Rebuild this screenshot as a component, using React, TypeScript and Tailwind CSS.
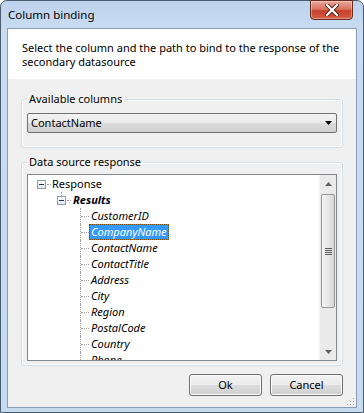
const font = "font-['Noto_Sans',sans-serif]"

const fields = [
  'CustomerID',
  'CompanyName',
  'ContactName',
  'ContactTitle',
  'Address',
  'City',
  'Region',
  'PostalCode',
  'Country',
  'Phone',
]

function MinusBox() {
  return (
    <div className="flex h-[9px] w-[9px] shrink-0 items-center justify-center border border-[#8d9db3] bg-[linear-gradient(#ffffff,#e4e8ee)]">
      <div className="h-px w-[5px] bg-[#1d3566]" />
    </div>
  )
}

function CloseButton() {
  return (
    <div className="absolute right-[10px] top-[-1px] flex h-[20px] w-[43px] items-center justify-center rounded-b-[4px] border border-[#6b2a20] bg-[linear-gradient(#e9a99a,#d9735f_45%,#c4402a_55%,#d6604a)] shadow-[inset_0_0_0_1px_rgba(255,255,255,0.35)]">
      <svg width="14" height="12" viewBox="0 0 14 12">
        <path d="M2 1 L12 11 M12 1 L2 11" stroke="#4a1d16" strokeWidth="4" strokeLinecap="square" />
        <path d="M2 1 L12 11 M12 1 L2 11" stroke="#ffffff" strokeWidth="2.2" strokeLinecap="square" />
      </svg>
    </div>
  )
}

function ChildRow({ label, selected }: { label: string; selected?: boolean }) {
  return (
    <div className="flex h-[16px] shrink-0 items-stretch">
      <div className="w-[52px] shrink-0" />
      <div className="flex w-[9px] shrink-0 flex-col border-l border-dotted border-[#a0a0a0]">
        <div className="h-[8px]" />
        <div className="border-t border-dotted border-[#a0a0a0]" />
      </div>
      <span
        className={
          selected
            ? 'px-[1px] leading-[14px] italic text-white bg-[#3399ff] border border-dotted border-[#7a4a00]'
            : 'px-[2px] leading-[16px] italic text-black'
        }
      >
        {label}
      </span>
    </div>
  )
}

function Scrollbar() {
  return (
    <div className="flex w-[17px] shrink-0 flex-col bg-[#eaeaea] border-l border-[#f4f4f4]">
      <div className="flex h-[17px] items-center justify-center">
        <svg width="7" height="4" viewBox="0 0 7 4">
          <path d="M0 4 L3.5 0 L7 4 Z" fill="#606060" />
        </svg>
      </div>
      <div className="h-[2px]" />
      <div className="mx-[1px] flex h-[114px] items-center justify-center rounded-[2px] border border-[#979797] bg-[linear-gradient(90deg,#f4f4f4,#e7e7e7_50%,#d6d6d6)]">
        <div className="flex flex-col gap-[1px]">
          <div className="h-px w-[7px] bg-[#5a5a5a]" />
          <div className="h-px w-[7px] bg-[#5a5a5a]" />
          <div className="h-px w-[7px] bg-[#5a5a5a]" />
          <div className="h-px w-[7px] bg-[#5a5a5a]" />
        </div>
      </div>
      <div className="flex-1" />
      <div className="flex h-[17px] items-center justify-center">
        <svg width="7" height="4" viewBox="0 0 7 4">
          <path d="M0 0 L3.5 4 L7 0 Z" fill="#606060" />
        </svg>
      </div>
    </div>
  )
}

function Tree() {
  return (
    <div className="flex h-[187px] border border-[#828790] bg-white">
      <div className="flex flex-1 flex-col overflow-hidden pt-[1px] text-[11px]">
        <div className="flex h-[16px] shrink-0 items-center pl-[9px]">
          <MinusBox />
          <div className="ml-[1px] w-[4px] border-t border-dotted border-[#a0a0a0]" />
          <span className="ml-[1px] leading-[16px] text-black">Response</span>
        </div>
        <div className="flex h-[16px] shrink-0 items-start pl-[29px]">
          <div className="flex flex-col">
            <div className="h-[4px] w-[5px] border-r border-dotted border-[#a0a0a0]" />
            <MinusBox />
          </div>
          <div className="ml-[1px] mt-[8px] w-[4px] border-t border-dotted border-[#a0a0a0]" />
          <span className="ml-[2px] font-bold italic leading-[16px] text-black">Results</span>
        </div>
        {fields.map((f) => (
          <ChildRow key={f} label={f} selected={f === 'CompanyName'} />
        ))}
      </div>
      <Scrollbar />
    </div>
  )
}

function Button({ children }: { children: string }) {
  return (
    <button className="flex h-[22px] w-[73px] items-center justify-center rounded-[3px] border border-[#707070] bg-[linear-gradient(#f2f2f2,#ebebeb_50%,#dddddd_50%,#cfcfcf)] text-[11px] text-black shadow-[inset_0_0_0_1px_#fcfcfc]">
      {children}
    </button>
  )
}

export default function App() {
  return (
    <div className={`${font} relative flex h-[413px] w-[364px] flex-col rounded-t-[7px] border border-[#4b5b70] bg-[linear-gradient(180deg,#bdd3ec,#c9dcf1_30px,#c6daf0)] px-[6px] pb-[6px]`}>
      <div className="flex h-[27px] shrink-0 items-center pl-[1px] text-[11.5px] text-black">
        Column binding
      </div>
      <CloseButton />
      <div className="flex flex-1 flex-col border border-[#8b9db5] bg-[#f0f0f0]">
        <div className="h-[50px] shrink-0 bg-white px-[14px] pt-[12px] text-[11px] leading-[14px] text-black">
          Select the column and the path to bind to the response of the secondary datasource
        </div>
        <fieldset className="mx-[13px] mt-[12px] rounded-[3px] border border-[#d5dfe5] px-[5px] pb-[14px] pt-[6px] shadow-[inset_0_0_0_1px_#ffffff]">
          <legend className="px-[2px] text-[11px] leading-[16px] text-black">Available columns</legend>
          <div className="flex h-[20px] items-center justify-between rounded-[2px] border border-[#707070] bg-[linear-gradient(#f2f2f2,#ebebeb_50%,#dddddd_50%,#cfcfcf)] pl-[3px] pr-[4px] text-[11px] text-black">
            <span>ContactName</span>
            <svg width="7" height="4" viewBox="0 0 7 4">
              <path d="M0 0 L3.5 4 L7 0 Z" fill="#000000" />
            </svg>
          </div>
        </fieldset>
        <fieldset className="mx-[13px] mt-[6px] rounded-[3px] border border-[#d5dfe5] px-[5px] pb-[4px] pt-[4px] shadow-[inset_0_0_0_1px_#ffffff]">
          <legend className="px-[2px] text-[11px] leading-[16px] text-black">Data source response</legend>
          <Tree />
        </fieldset>
        <div className="mt-[8px] flex justify-end gap-[8px] pr-[13px]">
          <Button>Ok</Button>
          <Button>Cancel</Button>
        </div>
        <div className="flex flex-1 items-end justify-end pb-[1px] pr-[1px]">
          <svg width="10" height="10" viewBox="0 0 10 10">
            <rect x="8" y="2" width="1" height="1" fill="#a0a0a0" />
            <rect x="5" y="5" width="1" height="1" fill="#a0a0a0" />
            <rect x="8" y="5" width="1" height="1" fill="#a0a0a0" />
            <rect x="2" y="8" width="1" height="1" fill="#a0a0a0" />
            <rect x="5" y="8" width="1" height="1" fill="#a0a0a0" />
            <rect x="8" y="8" width="1" height="1" fill="#a0a0a0" />
          </svg>
        </div>
      </div>
    </div>
  )
}
